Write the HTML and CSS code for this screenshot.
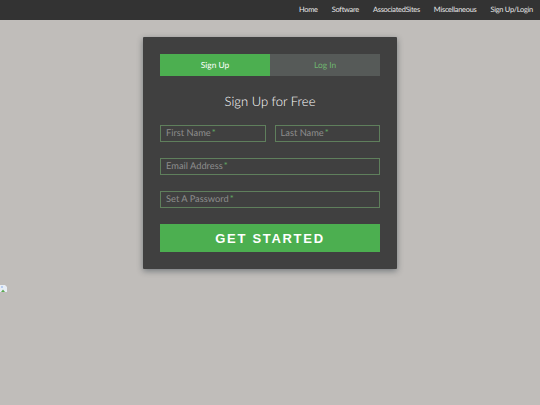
FILE: index.html
```html
<!DOCTYPE html>
<html lang="en">
<head>
    <meta charset="UTF-8">
    <title>Sign Up</title>
    <link rel="stylesheet" href="styles.css">
</head>
<body>

    <div class="topnav">
        <a href="#">Home</a>
        <a href="#">Software</a>
        <a href="#">AssociatedSites</a>
        <a href="#">Miscellaneous</a>
        <a href="#">Sign Up/Login</a>
    </div>

    <div class="form">
        <div class="tabs">
            <a href="#" class="tab active">Sign Up</a>
            <a href="#" class="tab">Log In</a>
        </div>

        <h1>Sign Up for Free</h1>

        <div class="top-row">
            <div class="field">First Name<span class="req">*</span></div>
            <div class="field">Last Name<span class="req">*</span></div>
        </div>
        <div class="field">Email Address<span class="req">*</span></div>
        <div class="field">Set A Password<span class="req">*</span></div>

        <button class="button">GET STARTED</button>
    </div>

    <svg class="broken" width="8" height="8" viewBox="0 0 8 8">
        <path d="M0 0H5L7 2V7H0Z" fill="#e8eef6"/>
        <path d="M1 7L3 4.5L5 7Z" fill="#5aa84f"/>
        <rect x="1" y="1" width="2" height="2" fill="#b8cdf0"/>
    </svg>

</body>
</html>
```

FILE: styles.css
```css
body{
    margin: 0;
    height: 405px;
    overflow: hidden;
    background-color: #c0bdba;
    font-family: "Lato", "Noto Sans", sans-serif;
    text-rendering: geometricPrecision;
}

.topnav{
    display: flex;
    justify-content: flex-end;
    gap: 14px;
    height: 20px;
    padding-right: 7px;
    background-color: #333;
}

.topnav a{
    color: #e8e8e8;
    font-size: 7.4px;
    letter-spacing: -0.25px;
    line-height: 20px;
    text-decoration: none;
}

.form{
    width: 220px;
    margin: 17px auto 0;
    padding: 17px;
    background-color: #404040;
    box-shadow: 0 2px 6px rgba(19, 35, 47, 0.45);
    border-radius: 1px;
}

.tabs{
    display: flex;
}

.tab{
    flex: 1;
    height: 22px;
    line-height: 23px;
    text-align: center;
    font-size: 8.4px;
    text-decoration: none;
    color: #6fb56f;
    background-color: #565a58;
}

.tab.active{
    color: #fff;
    background-color: #4caf50;
}

h1{
    margin: 16px 0 14px;
    height: 19px;
    line-height: 19px;
    text-align: center;
    font-size: 13px;
    font-weight: 300;
    color: #fff;
}

.top-row{
    display: flex;
    gap: 9px;
}

.top-row .field{
    flex: 1;
}

.field{
    box-sizing: border-box;
    height: 17px;
    line-height: 14px;
    margin-bottom: 16px;
    padding-left: 5px;
    border: 1px solid #5f7f5c;
    font-size: 9.3px;
    color: #8c8c8c;
}

.req{
    margin-left: 1px;
    color: #5f9f5f;
}

.button{
    display: block;
    width: 100%;
    height: 28px;
    padding: 0;
    border: 0;
    background-color: #4caf50;
    color: #fff;
    font-family: "Liberation Sans", sans-serif;
    font-size: 13px;
    font-weight: bold;
    letter-spacing: 1.7px;
}

.broken{
    display: block;
    margin-top: 16px;
}
```
